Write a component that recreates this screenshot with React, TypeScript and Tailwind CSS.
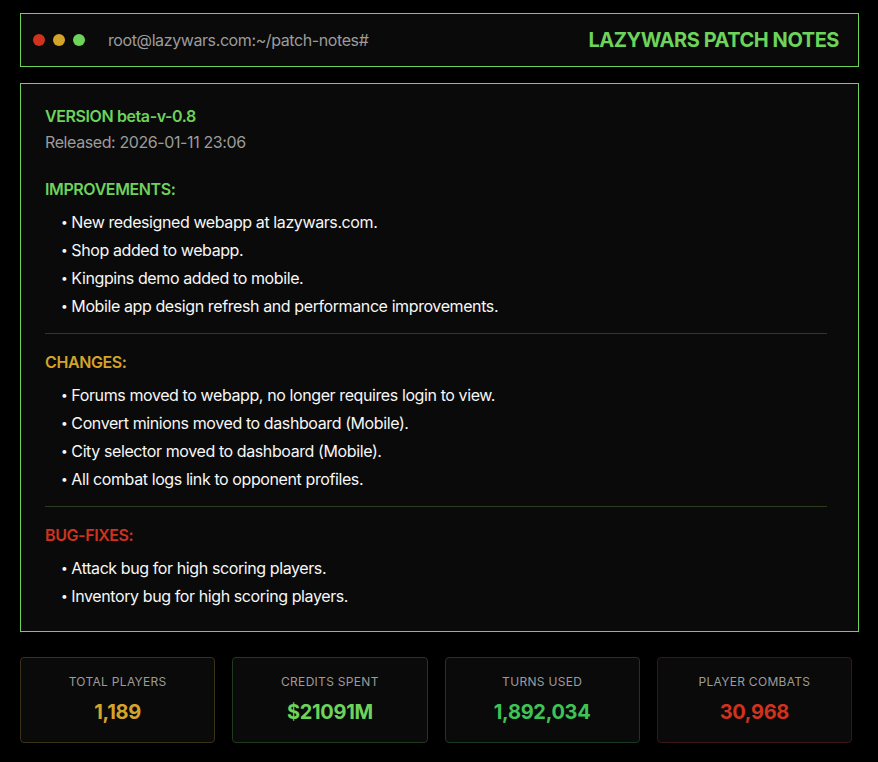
import React from 'react';

const sections = [
  {
    title: 'IMPROVEMENTS:',
    color: 'text-[#6dd35b]',
    items: [
      'New redesigned webapp at lazywars.com.',
      'Shop added to webapp.',
      'Kingpins demo added to mobile.',
      'Mobile app design refresh and performance improvements.',
    ],
  },
  {
    title: 'CHANGES:',
    color: 'text-[#d4a32a]',
    items: [
      'Forums moved to webapp, no longer requires login to view.',
      'Convert minions moved to dashboard (Mobile).',
      'City selector moved to dashboard (Mobile).',
      'All combat logs link to opponent profiles.',
    ],
  },
  {
    title: 'BUG-FIXES:',
    color: 'text-[#d0321d]',
    items: ['Attack bug for high scoring players.', 'Inventory bug for high scoring players.'],
  },
];

const stats = [
  { label: 'TOTAL PLAYERS', value: '1,189', color: 'text-[#d4a32a]', border: 'border-[#3a3117]' },
  { label: 'CREDITS SPENT', value: '$21091M', color: 'text-[#6dd35b]', border: 'border-[#1f3a1d]' },
  { label: 'TURNS USED', value: '1,892,034', color: 'text-[#3ec456]', border: 'border-[#1a3a20]' },
  { label: 'PLAYER COMBATS', value: '30,968', color: 'text-[#d0321d]', border: 'border-[#3a1714]' },
];

export default function App() {
  return (
    <div className="min-h-[762px] w-full bg-black pt-[13px] pl-[20px] font-['Inter',sans-serif]">
      {/* Terminal header */}
      <div className="flex h-[54px] w-[839px] items-center justify-between border border-[#6dd35b] bg-[#0a0a0a] pl-[12px] pr-[19px]">
        <div className="flex items-center">
          <span className="h-[12px] w-[12px] rounded-full bg-[#d0321d]" />
          <span className="ml-[8px] h-[12px] w-[12px] rounded-full bg-[#d4a32a]" />
          <span className="ml-[8px] h-[12px] w-[12px] rounded-full bg-[#6dd35b]" />
          <span className="ml-[23px] text-[16px] tracking-[-0.4px] text-[#9c9c9c]">root@lazywars.com:~/patch-notes#</span>
        </div>
        <h1 className="text-[20px] font-bold tracking-[-0.45px] text-[#6dd35b]">LAZYWARS PATCH NOTES</h1>
      </div>

      {/* Patch notes */}
      <div className="mt-[16px] w-[839px] border border-[#6dd35b] bg-[#0a0a0a] pl-[24px] pr-[31px] pt-[20px] pb-[21px] tracking-[-0.4px]">
        <div className="text-[16px] font-semibold leading-[24px] text-[#6dd35b]">VERSION beta-v-0.8</div>
        <div className="mt-[2px] text-[16px] leading-[24px] text-[#9c9c9c]">Released: 2026-01-11 23:06</div>

        {sections.map((s, i) => (
          <div key={s.title} className={i === 0 ? 'mt-[23px]' : 'mt-[13px] border-t border-[#2a3d23] pt-[16px]'}>
            <div className={`text-[16px] font-semibold leading-[24px] ${s.color}`}>{s.title}</div>
            <ul className="mt-[7px] pl-[16px]">
              {s.items.map((item) => (
                <li key={item} className="flex h-[28px] items-center text-[16px] text-[#f7f7f7]">
                  <span className="mr-[4px] text-[12px]">•</span>
                  {item}
                </li>
              ))}
            </ul>
          </div>
        ))}
      </div>

      {/* Stats */}
      <div className="mt-[25px] grid w-[832px] grid-cols-4 gap-[17px]">
        {stats.map((s) => (
          <div
            key={s.label}
            className={`flex h-[86px] flex-col items-center justify-center rounded-[4px] border bg-[#0a0a0a] ${s.border}`}
          >
            <div className="text-[12px] tracking-[0.3px] text-[#9c9c9c]">{s.label}</div>
            <div className={`mt-[6px] text-[20px] font-bold tracking-[-0.3px] ${s.color}`}>{s.value}</div>
          </div>
        ))}
      </div>
    </div>
  );
}
